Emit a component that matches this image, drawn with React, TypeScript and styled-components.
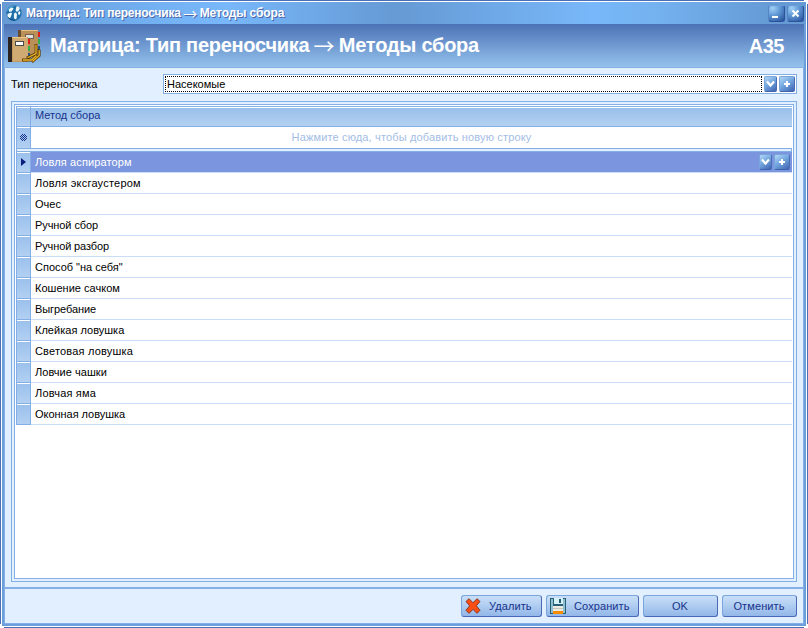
import React from "react";
import styled, { createGlobalStyle } from "styled-components";

const GlobalStyle = createGlobalStyle`
  * { box-sizing: border-box; }
  body { margin: 0; overflow: hidden; background: #fff; }
`;

const WindowOutline = styled.div`
  width: 808px;
  height: 628px;
  padding: 1px;
  background:
    linear-gradient(#4a6fb5, #4a6fb5) 4px 0 / 800px 1px no-repeat,
    linear-gradient(#4a6fb5, #4a6fb5) 4px 627px / 800px 1px no-repeat,
    linear-gradient(#4a6fb5, #4a6fb5) 0 4px / 1px 620px no-repeat,
    linear-gradient(#4a6fb5, #4a6fb5) 807px 4px / 1px 620px no-repeat,
    #fff;
  font: 11px/14px "Liberation Sans", Arial, sans-serif;
  color: #000;
  cursor: default;
  user-select: none;
`;

const WindowFrame = styled.div`
  display: flex;
  flex-direction: column;
  width: 804px;
  height: 624px;
  margin: 1px;
  background: #6a9fdc;
`;

const TitleBar = styled.div`
  display: flex;
  align-items: center;
  flex: none;
  height: 22px;
  padding: 0 2px 0 4px;
  background: linear-gradient(90deg, #659ad4 0, #74b2f4 160px, #78b7f9 225px, #659ad4 395px, #78b7f9 590px, #74b2f0 650px, #659ad4 775px);
`;

const TitleText = styled.div`
  display: flex;
  flex: 1;
  margin-left: 4px;
  font-size: 12px;
  font-weight: bold;
  color: #fff;
  text-shadow: 1px 1px 0 #4c66a8;
  white-space: pre;
`;

const Spaced = styled.span<{ $spacing: number }>`
  letter-spacing: ${(p) => p.$spacing}px;
`;

const Arrow = styled.span<{ $width: number; $size: number }>`
  display: flex;
  justify-content: center;
  width: ${(p) => p.$width}px;
  font-family: "Noto Sans CJK JP", sans-serif;
  font-size: ${(p) => p.$size}px;
  font-weight: normal;
`;

const WindowButton = styled.div`
  display: flex;
  width: 17px;
  height: 17px;
  margin-left: 2px;
  border: 1px solid #2b5299;
  border-top-color: #6a9cd6;
  border-left-color: #5585c4;
  border-radius: 3px;
  background: radial-gradient(circle at 25% 15%, #a0d0f6 0, #5e96d4 45%, #1f4692 105%);
`;

const Client = styled.div`
  display: flex;
  flex-direction: column;
  flex: 1;
  margin: 0 2px 2px;
  border: solid #83aee6;
  border-width: 0 1px 1px;
  background: #e2effe;
`;

const Banner = styled.div`
  display: flex;
  align-items: center;
  flex: none;
  height: 44px;
  margin: 0 -1px;
  padding: 0 20px 0 4px;
  border-bottom: 1px solid #83b2e2;
  background: linear-gradient(#4c72b6, #94c2ec);
  color: #fff;
  font-size: 20px;
  font-weight: bold;
  line-height: 24px;
`;

const BannerTitle = styled.div`
  display: flex;
  flex: 1;
  margin: 0 0 1px 9px;
  white-space: pre;
`;

const FieldRow = styled.div`
  display: flex;
  align-items: center;
  flex: none;
  height: 20px;
  margin: 6px 6px 0;
`;

const FieldLabel = styled.div`
  width: 152px;
`;

const Combo = styled.div`
  display: flex;
  flex: 1;
  height: 20px;
  border: 1px solid #83aee2;
  background: #fff;
  padding: 1px;
`;

const ComboValue = styled.div`
  flex: 1;
  border: 1px dotted #000;
  padding: 0 1px;
  margin-right: 2px;
  line-height: 14px;
`;

const MiniButton = styled.div<{ $width: number }>`
  display: flex;
  width: ${(p) => p.$width}px;
  height: 16px;
  border: 1px solid #7aa5dc;
  border-right-color: #4a6db6;
  border-bottom-color: #3f62ac;
  border-radius: 2px;
  background: linear-gradient(145deg, #b4d8f6 0, #74a8e0 45%, #3f64b2 100%);
`;

const MiniGroup = styled.div`
  display: flex;
  gap: 2px;
`;

const Panel = styled.div`
  flex: 1;
  margin: 7px 6px 5px;
  padding: 2px;
  border: 1px solid #83aee6;
`;

const Grid = styled.div`
  height: 100%;
  padding: 1px;
  border: 1px solid #83aee6;
  background: #fff;
`;

const HeaderRow = styled.div`
  display: flex;
  height: 21px;
  border: solid #83aee6;
  border-width: 1px 0 1px 1px;
`;

const HeaderCell = styled.div`
  flex: 1;
  border-top: 1px solid #fff;
  padding: 0 0 0 4px;
  background: linear-gradient(#98bfea, #b4d2f2);
  color: #17338c;
`;

const Indicator = styled.div`
  display: flex;
  flex: none;
  align-items: center;
  justify-content: center;
  width: 15px;
  border: solid #83aee6;
  border-width: 0 1px 1px;
  background: linear-gradient(#fff, #fff) 0 0 / 100% 1px no-repeat, linear-gradient(#9ac0ec, #b2d0f2);
`;

const HeaderIndicator = styled(Indicator)`
  width: 14px;
  border-width: 0 1px 0 0;
`;

const NewRowIndicator = styled(Indicator)`
  border-bottom-width: 0;
`;

const NewRow = styled.div`
  display: flex;
  height: 21px;
`;

const NewRowHint = styled.div`
  flex: 1;
  padding-top: 3px;
  color: #a3bde6;
  text-align: center;
  letter-spacing: 0.15px;
`;

const Separator = styled.div`
  height: 4px;
  border: 1px solid #83aee6;
  background: #e2effe;
`;

const DataRow = styled.div`
  display: flex;
  height: 21px;
`;

const DataCell = styled.div<{ $selected: boolean }>`
  display: flex;
  justify-content: space-between;
  flex: 1;
  padding: 2px 2px 0 4px;
  border-bottom: 1px solid #cbdcf6;
  background: ${(p) => (p.$selected ? "#7b95de" : "#fff")};
  color: ${(p) => (p.$selected ? "#fff" : "#000")};
  line-height: 16px;
`;

const Footer = styled.div`
  display: flex;
  justify-content: flex-end;
  gap: 4px;
  flex: none;
  height: 36px;
  padding: 6px 6px 0;
  border-top: 2px solid #83aee6;
`;

const Button = styled.button<{ $width: number; $icon?: boolean }>`
  display: flex;
  align-items: center;
  justify-content: ${(p) => (p.$icon ? "flex-start" : "center")};
  width: ${(p) => p.$width}px;
  height: 22px;
  padding: ${(p) => (p.$icon ? "0 0 0 3px" : "0 1px 0 0")};
  border: 1px solid #7ba6dc;
  border-right-color: #4a6ab8;
  border-bottom-color: #4a6ab8;
  border-radius: 3px;
  background: linear-gradient(#c8dff8 0, #b4d0f2 40%, #93b7e8 100%);
  color: #17338c;
  font: inherit;
  letter-spacing: 0.1px;
`;

const ButtonLabel = styled.span`
  margin-left: 8px;
`;

const Globe = () => (
  <svg width="16" height="16" viewBox="0 0 16 16">
    <circle cx="8" cy="8" r="7.7" fill="#2070aa" />
    <path d="M1 5Q4 0 9 .6 6 3 1 6z" fill="#4da0d0" />
    <path d="M10.5 1.2q3 0 3.2 1.8 0 3-2 3.6-2.2.6-2-1.6zM5 2.8q2.5-.6 2.5 1L5.5 6.5 3 6.8 2.8 4.5zM1.5 9l3.500-1.600 1 1-1.500 4.200-1.500.8-1.500-1.600zM8 8.500l1.800-1 1.200 1.800-.5 4.500-1.600.6-1-2zM12 7.500l1.500-1.500 1 1.500-1 2.500-1.200-.5z" fill="#eff9fc" />
    <path d="M1.5 12q3 4 8 3.3" fill="none" stroke="#0f4a82" />
  </svg>
);

const Books = () => (
  <svg width="33" height="34" viewBox="0 0 33 34" shapeRendering="crispEdges">
    <path d="M10 1h20v26H10z" fill="#b99058" />
    <path d="M10 1h3v8h-3z" fill="#6b4b2d" />
    <path d="M13 1h17v1H13z" fill="#e3bf80" />
    <path d="M30 3h2v5h-2z" fill="#e31b19" /><path d="M30 10h2v5h-2z" fill="#33b04a" /><path d="M30 17h2v5h-2z" fill="#20548c" />
    <path d="M17 5h9v5h-9z" fill="#735f4c" /><path d="M18 6h7v3h-7z" fill="#dde0df" />
    <path d="M0 8h20v25H0z" fill="#c39962" />
    <path d="M0 8h4v25H0z" fill="#2b231f" /><path d="M4 8h15v1H4z" fill="#efc783" />
    <path d="M5 9h15v23H5z" fill="#cfab73" />
    <path d="M7 12h9v5H7z" fill="#4d4b48" /><path d="M8 13h7v3H8z" fill="#fff" />
    <path d="M20 10h2v5h-2z" fill="#e31b19" /><path d="M20 17h2v5h-2z" fill="#33b04a" /><path d="M20 24h2v4h-2z" fill="#20548c" />
    <g fill="none" shapeRendering="auto" strokeLinecap="square">
      <path d="M28 16.5v8l-8 4M31.2 22v4.5L25 32M15.5 31h8l4.5-4" stroke="#593700" strokeWidth="2.8" />
      <path d="M28 16.5v8l-8 4M31.2 22v4.5L25 32M15.5 31h8l4.5-4" stroke="#e8b52c" strokeWidth="1.3" />
    </g>
  </svg>
);

const Chevron = () => (
  <svg width="11" height="14" viewBox="0 0 11 14"><path d="M2 4.5l3.5 4 3.5-4" fill="none" stroke="#fff" strokeWidth="2.2" /></svg>
);

const Plus = () => (
  <svg width="14" height="14" viewBox="0 0 14 14" shapeRendering="crispEdges"><path d="M4 6h2V4h2v2h2v2H8v2H6V8H4z" fill="#fff" /></svg>
);

const EditorButtons = () => (
  <MiniGroup>
    <MiniButton $width={13}><Chevron /></MiniButton>
    <MiniButton $width={16}><Plus /></MiniButton>
  </MiniGroup>
);

const CurrentRowMark = () => (
  <svg width="5" height="8" viewBox="0 0 5 8"><path d="M0 0l5 4-5 4z" fill="#0c1f7c" /></svg>
);

const NewRowMark = () => (
  <svg width="7" height="7" viewBox="0 0 7 7" shapeRendering="crispEdges">
    <path d="M2 0h1v1H2zM4 0h1v1H4zM1 1h1v1H1zM3 1h1v1H3zM5 1h1v1H5zM0 2h1v1H0zM2 2h1v1H2zM4 2h1v1H4zM6 2h1v1H6zM1 3h1v1H1zM3 3h1v1H3zM5 3h1v1H5zM0 4h1v1H0zM2 4h1v1H2zM4 4h1v1H4zM6 4h1v1H6zM1 5h1v1H1zM3 5h1v1H3zM5 5h1v1H5zM2 6h1v1H2zM4 6h1v1H4z" fill="#17338c" />
  </svg>
);

const DeleteIcon = () => (
  <svg width="16" height="16" viewBox="0 0 16 16">
    <path d="M1 3.5L4 .7 8 4.8 12 .7l3 2.8-3.7 4.3L15 12.3 12 15.3 8 11.3l-4 4-3-3 3.7-4.5z" fill="#fa4e12" stroke="#8d3521" strokeLinejoin="round" />
  </svg>
);

const SaveIcon = () => (
  <svg width="16" height="16" viewBox="0 0 16 16" shapeRendering="crispEdges">
    <path d="M0 0h15l1 1v15H0z" fill="#285f75" /><path d="M1 1h2v14H1zM13 1h2v14h-2z" fill="#8fc0d2" />
    <path d="M4 0h9v6H4z" fill="#d6f0f8" /><path d="M9 1h2v4H9z" fill="#245b70" />
    <path d="M3 8h10v8H3z" fill="#eceae2" /><path d="M3 10h10v1H3z" fill="#c5c5bd" /><path d="M3 13h10v3H3z" fill="#fa8c00" />
  </svg>
);

const methods = [
  { name: "Ловля аспираторм", spacing: 0.12 },
  { name: "Ловля эксгаустером", spacing: 0.22 },
  { name: "Очес", spacing: 0 },
  { name: "Ручной сбор", spacing: -0.08 },
  { name: "Ручной разбор", spacing: -0.12 },
  { name: "Способ \"на себя\"", spacing: 0 },
  { name: "Кошение сачком", spacing: 0.02 },
  { name: "Выгребание", spacing: -0.08 },
  { name: "Клейкая ловушка", spacing: 0.02 },
  { name: "Световая ловушка", spacing: 0.18 },
  { name: "Ловчие чашки", spacing: 0.04 },
  { name: "Ловчая яма", spacing: 0.18 },
  { name: "Оконная ловушка", spacing: -0.04 },
];

export default function App() {
  return (
    <WindowOutline>
      <GlobalStyle />
      <WindowFrame>
        <TitleBar>
          <Globe />
          <TitleText>
            <Spaced $spacing={-0.2}>Матрица: Тип переносчика</Spaced>
            <Arrow $width={19} $size={14}>→</Arrow>
            <Spaced $spacing={-0.1}>Методы сбора</Spaced>
          </TitleText>
          <WindowButton>
            <svg width="15" height="15" shapeRendering="crispEdges"><path d="M3 10h6v2H3z" fill="#fff" /></svg>
          </WindowButton>
          <WindowButton>
            <svg width="15" height="15"><path d="M4.5 4.5l6 6m0-6l-6 6" stroke="#fff" strokeWidth="2" /></svg>
          </WindowButton>
        </TitleBar>
        <Client>
          <Banner>
            <Books />
            <BannerTitle>
              <Spaced $spacing={-0.27}>Матрица: Тип переносчика</Spaced>
              <Arrow $width={29.5} $size={21}>→</Arrow>
              <Spaced $spacing={-0.25}>Методы сбора</Spaced>
            </BannerTitle>
            <Spaced $spacing={-0.5}>А35</Spaced>
          </Banner>
          <FieldRow>
            <FieldLabel>Тип переносчика</FieldLabel>
            <Combo>
              <ComboValue>Насекомые</ComboValue>
              <EditorButtons />
            </Combo>
          </FieldRow>
          <Panel>
            <Grid>
              <HeaderRow>
                <HeaderIndicator />
                <HeaderCell>Метод сбора</HeaderCell>
              </HeaderRow>
              <NewRow>
                <NewRowIndicator><NewRowMark /></NewRowIndicator>
                <NewRowHint>Нажмите сюда, чтобы добавить новую строку</NewRowHint>
              </NewRow>
              <Separator />
              {methods.map((method, i) => (
                <DataRow key={method.name}>
                  <Indicator>{i === 0 && <CurrentRowMark />}</Indicator>
                  <DataCell $selected={i === 0}>
                    <Spaced $spacing={method.spacing}>{method.name}</Spaced>
                    {i === 0 && <EditorButtons />}
                  </DataCell>
                </DataRow>
              ))}
            </Grid>
          </Panel>
          <Footer>
            <Button $width={81} $icon><DeleteIcon /><ButtonLabel>Удалить</ButtonLabel></Button>
            <Button $width={93} $icon><SaveIcon /><ButtonLabel>Сохранить</ButtonLabel></Button>
            <Button $width={75}>OK</Button>
            <Button $width={75}>Отменить</Button>
          </Footer>
        </Client>
      </WindowFrame>
    </WindowOutline>
  );
}
